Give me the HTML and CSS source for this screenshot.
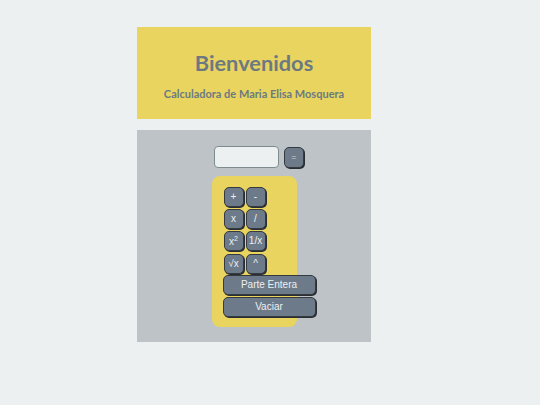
FILE: index.html
```html
<!DOCTYPE html>
<html lang="es">
<head>
<meta charset="utf-8">
<title>Calculadora</title>
<link rel="stylesheet" href="styles.css">
</head>
<body>
<div class="page">
  <header class="header">
    <h1 class="title">Bienvenidos</h1>
    <p class="subtitle">Calculadora de Maria Elisa Mosquera</p>
  </header>
  <main class="panel">
    <div class="display-row">
      <input class="display" type="text">
      <button class="btn btn-eq">=</button>
    </div>
    <div class="keypad">
      <div class="keys">
        <button class="btn key">+</button>
        <button class="btn key">-</button>
        <button class="btn key">x</button>
        <button class="btn key">/</button>
        <button class="btn key">x<sup>2</sup></button>
        <button class="btn key">1/x</button>
        <button class="btn key">√x</button>
        <button class="btn key">^</button>
      </div>
      <button class="btn wide">Parte Entera</button>
      <button class="btn wide">Vaciar</button>
    </div>
  </main>
</div>
</body>
</html>
```

FILE: styles.css
```css
html, body {
  margin: 0;
  padding: 0;
  background: #ecf0f1;
}
body {
  font-family: "Liberation Sans", Arial, sans-serif;
}
.page {
  width: 234px;
  margin-left: 137px;
  padding-top: 27px;
  display: flex;
  flex-direction: column;
  gap: 11px;
}
.header {
  background: #e9d460;
  height: 92px;
  display: flex;
  flex-direction: column;
  align-items: center;
  box-sizing: border-box;
  padding-top: 23px;
}
.title {
  margin: 0;
  font-family: "Lato", "Open Sans", sans-serif;
  font-weight: 700;
  font-size: 21.8px;
  line-height: 25px;
  color: #6c7a80;
}
.subtitle {
  margin: 12px 0 0;
  font-family: "Lato", "Open Sans", sans-serif;
  font-weight: 700;
  font-size: 11px;
  line-height: 13px;
  color: #6c7a80;
}
.panel {
  background: #bdc3c7;
  height: 212px;
  box-sizing: border-box;
  padding-top: 16px;
  display: flex;
  flex-direction: column;
  align-items: center;
}
.display-row {
  display: flex;
  align-items: flex-start;
  gap: 5px;
  padding-left: 10px;
}
.display {
  width: 65px;
  height: 22px;
  box-sizing: border-box;
  border: 1px solid #7f8c8d;
  border-radius: 4px;
  background: #ecf0f1;
  padding: 0;
  margin: 0;
}
.btn {
  background: #6c7a89;
  color: #ecf0f1;
  border: 1px solid #353a40;
  border-radius: 5px;
  box-shadow: 1px 1px 0 #2a2e33;
  font-family: "Liberation Sans", Arial, sans-serif;
  font-size: 10px;
  padding: 0;
  margin: 0;
  box-sizing: border-box;
  line-height: 1;
}
.btn-eq {
  width: 20px;
  height: 21px;
  margin-top: 1px;
  font-size: 9px;
  color: #c9ced3;
}
.keypad {
  margin-top: 8px;
  width: 85px;
  box-sizing: border-box;
  background: #e9d460;
  border-radius: 8px;
  padding: 11px 0 10px 11px;
  display: flex;
  flex-direction: column;
  gap: 2px;
}
.keys {
  display: grid;
  grid-template-columns: 20px 20px;
  grid-auto-rows: 20px;
  column-gap: 2px;
  row-gap: 2px;
  margin-left: 1px;
}
.keys .key:nth-child(7),
.keys .key:nth-child(8) {
  margin-top: 1px;
}
.key {
  width: 20px;
  height: 20px;
}
.key sup {
  font-size: 7px;
  vertical-align: 4px;
}
.wide {
  width: 93px;
  height: 20px;
}
```
